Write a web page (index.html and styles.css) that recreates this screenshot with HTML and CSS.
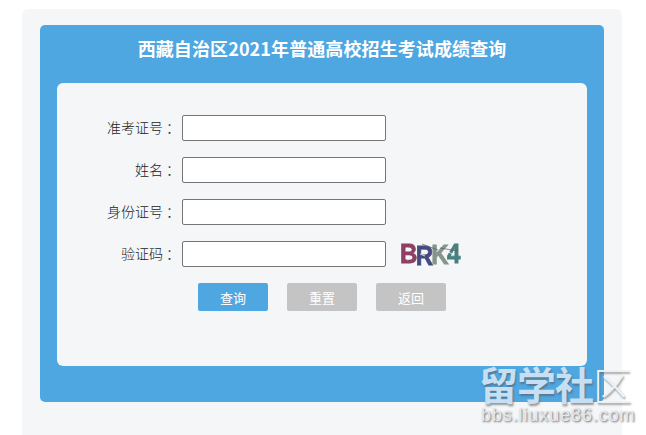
FILE: index.html
```html
<!DOCTYPE html>
<html lang="zh-CN">
<head>
<meta charset="utf-8">
<title>西藏自治区2021年普通高校招生考试成绩查询</title>
<link rel="stylesheet" href="styles.css">
</head>
<body>
<div class="page">
  <div class="card">
    <h1 class="title">西藏自治区2021年普通高校招生考试成绩查询</h1>
    <form class="panel">
      <div class="row"><label class="label">准考证号<span class="colon">：</span></label><input class="field" type="text"></div>
      <div class="row"><label class="label">姓名<span class="colon">：</span></label><input class="field" type="text"></div>
      <div class="row"><label class="label">身份证号<span class="colon">：</span></label><input class="field" type="text"></div>
      <div class="row">
        <label class="label">验证码<span class="colon">：</span></label><input class="field" type="text">
        <span class="captcha">
          <span class="captcha-text"><span class="c1">B</span><span class="c2">R</span><span class="c3">K</span><span class="c4">4</span></span>
          <svg class="captcha-noise" viewBox="0 0 62 28" width="62" height="28" aria-hidden="true">
            <path d="M7 8l5 2M7 20l5-2M20 14l5 2M47 11l5 3" fill="none" stroke="#f4f6f8" stroke-width=".8"/>
            <path d="M22 4l16 6M40 8l18 3" fill="none" stroke="#5a5a70" stroke-width=".7"/>
          </svg>
        </span>
      </div>
      <div class="actions">
        <button class="btn primary" type="button">查询</button>
        <button class="btn" type="button">重置</button>
        <button class="btn" type="button">返回</button>
      </div>
    </form>
  </div>
</div>
<div class="watermark">
  <div class="wm-cn">留学社<span class="wm-last">区</span></div>
  <div class="wm-en">bbs.liuxue86.com</div>
</div>
</body>
</html>
```
FILE: styles.css
```css
* { box-sizing: border-box; }
html, body { margin: 0; height: 100%; overflow: hidden; }
body {
  background: #fff;
  font-family: "Noto Sans CJK SC", "Liberation Sans", sans-serif;
  position: relative;
}
.page {
  width: 600px;
  height: 426px;
  margin: 9px 0 0 22px;
  padding: 16px 18px 0;
  background: #f4f6f8;
  border-radius: 6px 6px 0 0;
}
.card {
  height: 377px;
  padding: 0 17px;
  background: #4fa7e2;
  border-radius: 5px;
}
.title {
  margin: 0;
  height: 58px;
  font-size: 18px;
  line-height: 46px;
  font-weight: 700;
  letter-spacing: .1px;
  color: #fff;
  text-align: center;
}
.panel {
  height: 283px;
  padding: 32px 0 0;
  background: #f4f6f8;
  border-radius: 6px;
}
.row {
  display: flex;
  align-items: center;
  height: 26px;
  margin-bottom: 16px;
}
.label {
  width: 120px;
  margin: 0 5px 3px 0;
  font-size: 14px;
  font-weight: 300;
  color: #222;
  text-align: right;
  white-space: nowrap;
}
.colon {
  margin: 0 -3px 0 3px;
  font-family: "Noto Sans CJK TC", sans-serif;
}
.field {
  width: 204px;
  height: 26px;
  padding: 0 4px;
  background: #fff;
  border: 1px solid #767676;
  border-radius: 2px;
}
.captcha {
  position: relative;
  width: 64px;
  height: 28px;
  margin-left: 14px;
}
.captcha-text {
  display: flex;
  font-family: "Liberation Sans", sans-serif;
  font-size: 28px;
  font-weight: 700;
  line-height: 28px;
  letter-spacing: -2px;
  -webkit-text-stroke: .8px currentColor;
  filter: blur(.4px);
  transform: scaleX(.86);
  transform-origin: left center;
}
.captcha-noise { position: absolute; left: 0; top: 0; }
.c1 { color: #8e3f63; }
.c2 { color: #454a7f; transform: translateY(2px); }
.c3 { color: #84968c; transform: translateY(1px); }
.c4 { color: #47807f; }
.actions {
  display: flex;
  gap: 19px;
  margin-left: 141px;
}
.btn {
  width: 70px;
  height: 28px;
  padding: 0;
  border: 0;
  border-radius: 2px;
  background: #c4c4c4;
  color: #fff;
  font-family: inherit;
  font-size: 13px;
}
.primary { background: #4fa7e2; }
.watermark {
  position: absolute;
  left: 479px;
  top: 362px;
  width: 160px;
  color: #c6dff2;
}
.wm-cn {
  font-size: 39px;
  line-height: 42px;
  font-weight: 700;
  letter-spacing: -1px;
  white-space: nowrap;
  text-shadow: 1px 2px 2px rgba(90, 90, 90, .6);
}
.wm-last { color: #eef3f7; font-weight: 300; }
.wm-en {
  margin-top: 2px;
  padding-left: 2px;
  font-family: "Liberation Sans", sans-serif;
  font-size: 18px;
  line-height: 18px;
  letter-spacing: .9px;
  color: #e4e8ec;
  white-space: nowrap;
  text-shadow: 1px 1px 2px rgba(70, 70, 70, .8);
}
```
